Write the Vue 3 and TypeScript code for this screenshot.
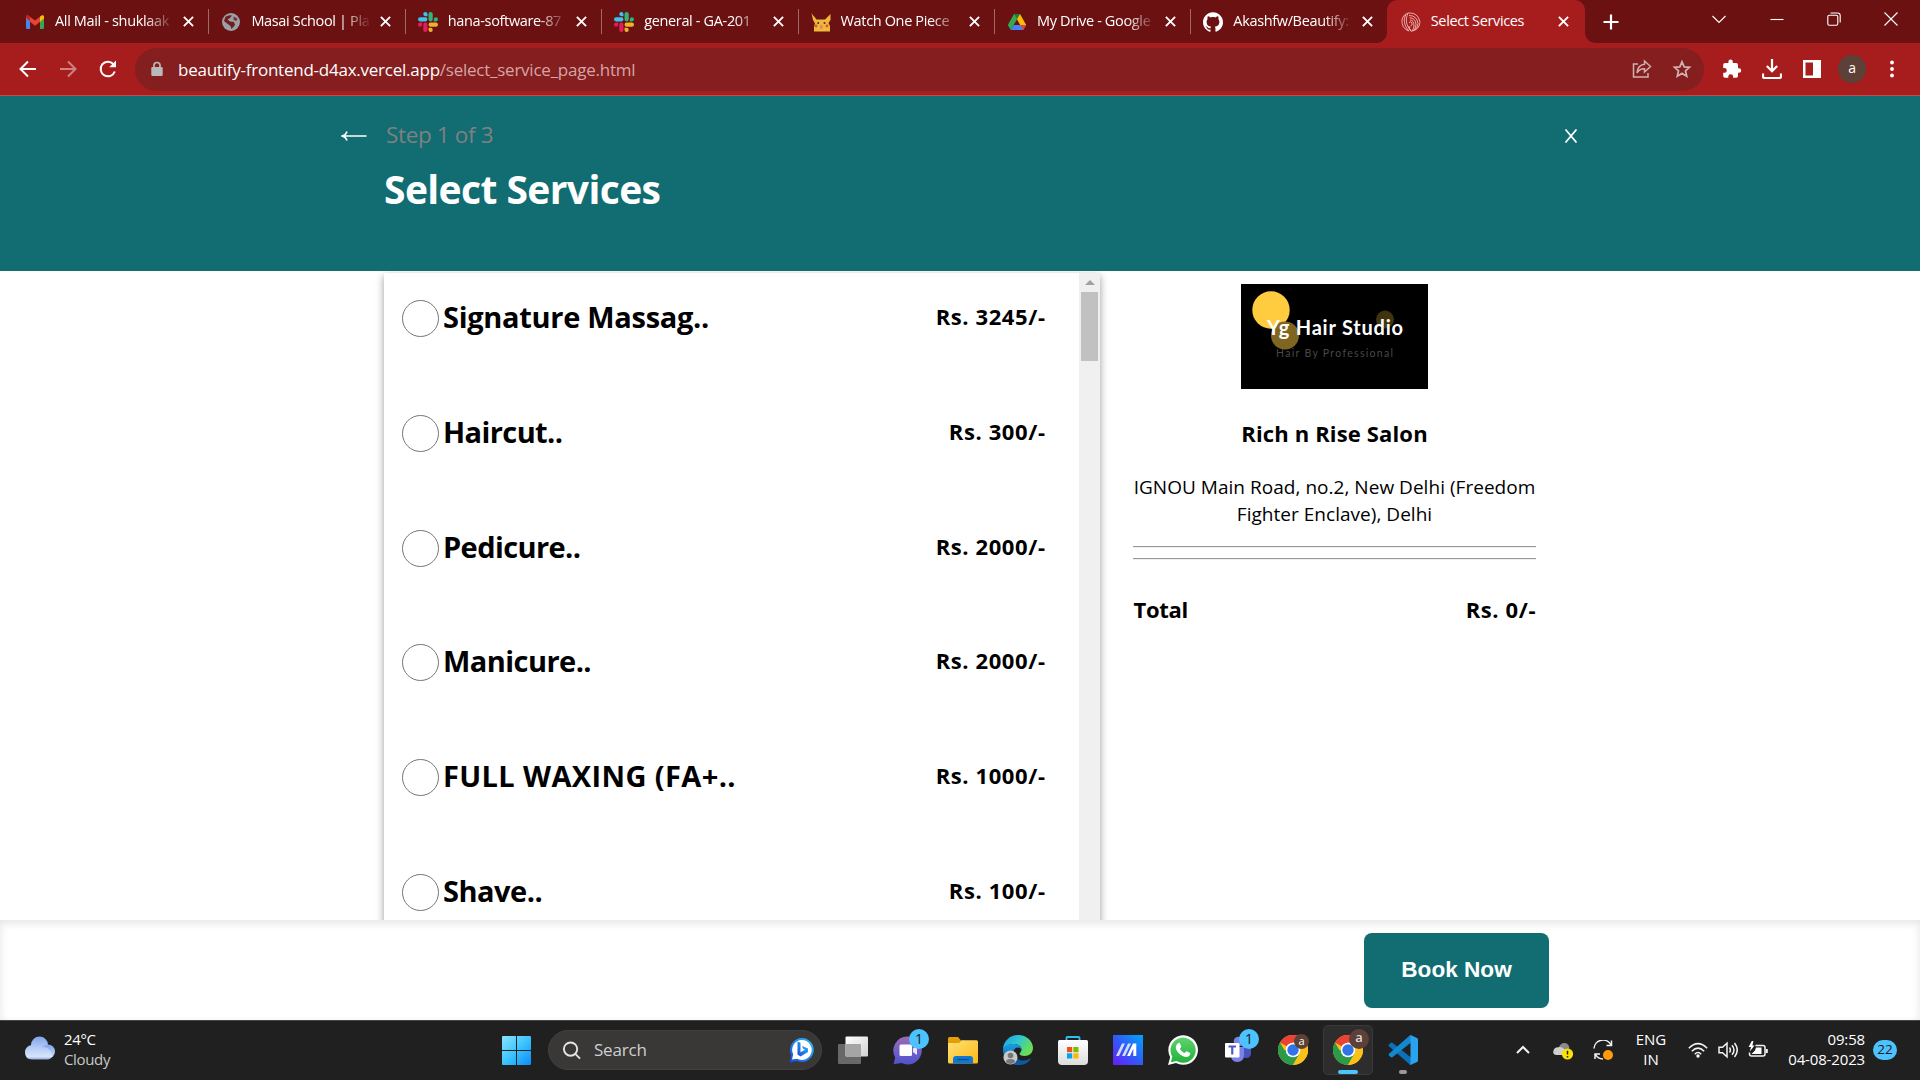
<script setup lang="ts">
interface Tab {
  icon: string
  title: string
  active?: boolean
}

interface Service {
  name: string
  price: number
  tracking: number
}

interface TaskItem {
  icon: string
  badge?: string
  state?: 'active' | 'running'
}

const tabs: Tab[] = [
  { icon: 'gmail', title: 'All Mail - shuklaak' },
  { icon: 'globe', title: 'Masai School | Pla' },
  { icon: 'slack', title: 'hana-software-87' },
  { icon: 'slack', title: 'general - GA-201' },
  { icon: 'pikachu', title: 'Watch One Piece' },
  { icon: 'drive', title: 'My Drive - Google' },
  { icon: 'github', title: 'Akashfw/Beautify:' },
  { icon: 'salon', title: 'Select Services', active: true },
]

const services: Service[] = [
  { name: 'Signature Massag..', price: 3245, tracking: -0.3 },
  { name: 'Haircut..', price: 300, tracking: -0.6 },
  { name: 'Pedicure..', price: 2000, tracking: -0.6 },
  { name: 'Manicure..', price: 2000, tracking: -0.55 },
  { name: 'FULL WAXING (FA+..', price: 1000, tracking: 0.38 },
  { name: 'Shave..', price: 100, tracking: -0.5 },
]

const taskItems: TaskItem[] = [
  { icon: 'taskview' },
  { icon: 'chat', badge: '1' },
  { icon: 'explorer' },
  { icon: 'edge' },
  { icon: 'store' },
  { icon: 'msi' },
  { icon: 'whatsapp' },
  { icon: 'teams', badge: '1' },
  { icon: 'chrome' },
  { icon: 'chrome2', state: 'active' },
  { icon: 'vscode', state: 'running' },
]
</script>

<template>
  <div class="screen">
    <svg class="sprite" width="0" height="0" aria-hidden="true">
      <defs>
        <linearGradient id="g-cloud" x1="0" y1="0" x2="0" y2="1">
          <stop offset="0" stop-color="#7fa4ea" /><stop offset="1" stop-color="#cfe0fb" />
        </linearGradient>
        <linearGradient id="g-cloud2" x1="0" y1="0" x2="0" y2="1">
          <stop offset="0" stop-color="#a9c4f3" /><stop offset=".8" stop-color="#d6e4fc" /><stop offset="1" stop-color="#8fa9de" />
        </linearGradient>
        <linearGradient id="g-win" gradientUnits="userSpaceOnUse" x1="0" y1="0" x2="29" y2="29">
          <stop offset="0" stop-color="#8be3ff" /><stop offset=".5" stop-color="#3cc4fd" /><stop offset="1" stop-color="#0a8cf5" />
        </linearGradient>
        <linearGradient id="g-bing" x1="0" y1="1" x2="1" y2="0">
          <stop offset="0" stop-color="#1b48e0" /><stop offset="1" stop-color="#2cc0f5" />
        </linearGradient>
        <linearGradient id="g-chat" x1="0" y1="0" x2="0" y2="1">
          <stop offset="0" stop-color="#9a6bb5" /><stop offset="1" stop-color="#4f52cf" />
        </linearGradient>
        <linearGradient id="g-folder" x1="0" y1="0" x2="1" y2="1">
          <stop offset="0" stop-color="#ffe078" /><stop offset="1" stop-color="#fdb913" />
        </linearGradient>
        <linearGradient id="g-edge" x1="0" y1="0" x2="1" y2=".5">
          <stop offset="0" stop-color="#1b9de2" /><stop offset=".5" stop-color="#2fc5d2" /><stop offset="1" stop-color="#6be04f" />
        </linearGradient>
        <linearGradient id="g-edge2" x1="0" y1="0" x2="0" y2="1">
          <stop offset="0" stop-color="#1aa0e4" /><stop offset="1" stop-color="#0d52a5" />
        </linearGradient>
        <linearGradient id="g-msi" x1="0" y1="1" x2="1" y2="0">
          <stop offset="0" stop-color="#6a1cf7" /><stop offset=".5" stop-color="#2f5bf8" /><stop offset="1" stop-color="#00a6fb" />
        </linearGradient>
        <linearGradient id="g-wa" x1="0" y1="0" x2="0" y2="1">
          <stop offset="0" stop-color="#5fd36d" /><stop offset="1" stop-color="#22b13c" />
        </linearGradient>
        <linearGradient id="g-tv" x1="0" y1="0" x2="1" y2="1">
          <stop offset="0" stop-color="#ffffff" /><stop offset="1" stop-color="#d2d2d2" />
        </linearGradient>
        <linearGradient id="g-store" x1="0" y1="0" x2="0" y2="1">
          <stop offset="0" stop-color="#ffffff" /><stop offset="1" stop-color="#dcdcdc" />
        </linearGradient>
      </defs>

      <symbol id="i-gmail" viewBox="0 0 20 20">
        <path d="M1 5v10.5q0 1.5 1.5 1.5H5V8z" fill="#4285f4" />
        <path d="M19 5v10.5q0 1.5-1.5 1.5H15V8z" fill="#34a853" />
        <path d="M15 5.2l1.4-1.5Q19 2.500 19 5.500L15 9.700z" fill="#fbbc04" />
        <path d="M1 5.500Q1 2.500 3.600 3.700L10 8.600l6.400-4.900L15 9.700l-5 4-5-4z" fill="#ea4335" />
        <path d="M15 4.800v4.900L19 6.500v-1Q18.800 2.600 16.400 3.700z" fill="#fbbc04" />
        <path d="M1 5.500L5 9V4.800L3.600 3.700Q1.200 2.800 1 5.500z" fill="#c5221f" />
      </symbol>
      <symbol id="i-globe" viewBox="0 0 20 20">
        <circle cx="10" cy="10" r="9" fill="#9aa0a6" />
        <path d="M4.500 4.800Q8 2.500 11 3.500L9 6 6.500 7.500 9 9.500l4 .5 1 3-3.500 4-1-3L6.800 12 3 9z" fill="#6b1112" opacity=".92" />
        <path d="M12.500 4.500l4 2-1 2.500-3-1z" fill="#6b1112" opacity=".75" />
      </symbol>
      <symbol id="i-slack" viewBox="0 0 24 24">
        <path d="M5.042 15.165a2.528 2.528 0 0 1-2.520 2.523A2.528 2.528 0 0 1 0 15.165a2.527 2.527 0 0 1 2.522-2.520h2.520zm1.271 0a2.527 2.527 0 0 1 2.521-2.520 2.527 2.527 0 0 1 2.521 2.520v6.313A2.528 2.528 0 0 1 8.834 24a2.528 2.528 0 0 1-2.521-2.522z" fill="#e01e5a" />
        <path d="M8.834 5.042a2.528 2.528 0 0 1-2.521-2.520A2.528 2.528 0 0 1 8.834 0a2.528 2.528 0 0 1 2.521 2.522v2.520zm0 1.271a2.528 2.528 0 0 1 2.521 2.521 2.528 2.528 0 0 1-2.521 2.521H2.522A2.528 2.528 0 0 1 0 8.834a2.528 2.528 0 0 1 2.522-2.521z" fill="#36c5f0" />
        <path d="M18.956 8.834a2.528 2.528 0 0 1 2.522-2.521A2.528 2.528 0 0 1 24 8.834a2.528 2.528 0 0 1-2.522 2.521h-2.522zm-1.270 0a2.528 2.528 0 0 1-2.523 2.521 2.527 2.527 0 0 1-2.520-2.521V2.522A2.527 2.527 0 0 1 15.163 0a2.528 2.528 0 0 1 2.523 2.522z" fill="#2eb67d" />
        <path d="M15.163 18.956a2.528 2.528 0 0 1 2.523 2.522A2.528 2.528 0 0 1 15.163 24a2.527 2.527 0 0 1-2.520-2.522v-2.522zm0-1.270a2.527 2.527 0 0 1-2.520-2.523 2.526 2.526 0 0 1 2.520-2.520h6.315A2.527 2.527 0 0 1 24 15.163a2.528 2.528 0 0 1-2.522 2.523z" fill="#ecb22e" />
      </symbol>
      <symbol id="i-pikachu" viewBox="0 0 20 20">
        <path d="M.5 1l5 6.500h8.500L19.500 2v6l-2 3 1.500 3v5.500H3V15l1-3.500L2 8z" fill="#edb83c" />
        <path d="M.5 1l2.200 1.500.8 2.500z" fill="#4a2c12" />
        <circle cx="7.200" cy="11" r="1" fill="#4a2c12" /><circle cx="13.500" cy="11" r="1" fill="#4a2c12" />
        <circle cx="5" cy="14" r="1.400" fill="#e0552c" /><circle cx="16" cy="14" r="1.400" fill="#e0552c" />
        <ellipse cx="10.400" cy="15" rx="1.500" ry="2" fill="#e9806a" />
      </symbol>
      <symbol id="i-drive" viewBox="0 0 20 20">
        <path d="M7 2L.800 13l3 5L10 7.200z" fill="#34a853" />
        <path d="M7 2h6l6.200 11h-6z" fill="#fbbc04" />
        <path d="M6.600 13h12.600l-3 5H3.800z" fill="#4285f4" />
        <path d="M13.200 13h6l-3 5z" fill="#ea4335" />
        <path d="M7 2h6l-3 5.200z" fill="#188038" />
      </symbol>
      <symbol id="i-github" viewBox="0 0 24 24">
        <path fill="#fff" d="M12 .297c-6.630 0-12 5.373-12 12 0 5.303 3.438 9.800 8.205 11.385.600.113.820-.258.820-.577 0-.285-.010-1.040-.015-2.040-3.338.724-4.042-1.610-4.042-1.610C4.422 18.070 3.633 17.700 3.633 17.700c-1.087-.744.084-.729.084-.729 1.205.084 1.838 1.236 1.838 1.236 1.070 1.835 2.809 1.305 3.495.998.108-.776.417-1.305.760-1.605-2.665-.300-5.466-1.332-5.466-5.930 0-1.310.465-2.380 1.235-3.220-.135-.303-.540-1.523.105-3.176 0 0 1.005-.322 3.300 1.230.960-.267 1.980-.399 3-.405 1.020.006 2.040.138 3 .405 2.280-1.552 3.285-1.230 3.285-1.230.645 1.653.240 2.873.120 3.176.765.840 1.230 1.910 1.230 3.220 0 4.610-2.805 5.625-5.475 5.920.420.360.810 1.096.810 2.220 0 1.606-.015 2.896-.015 3.286 0 .315.210.690.825.570C20.565 22.092 24 17.592 24 12.297c0-6.627-5.373-12-12-12" />
      </symbol>
      <symbol id="i-salon" viewBox="0 0 20 20">
        <g fill="none" stroke="#f0bcb8" stroke-width=".9">
          <path d="M8 .8A9 9.300 0 0 0 1 8q-.5 8 6.500 11M5 2.500C2 7 3 14 8 19M7 1.500C4 7 5 13 10 19.300q8-1 9-9" />
          <path d="M8 3.500q8 0 9 8-.5 4-3 6.500M8.500 5.800q6 0 6.500 6.500 0 4-2.500 6.500M9 8q4 0 4 6-.2 3-2 5M8 1q9-.500 11 9" />
          <path d="M8 10.500q2-1.500 3 .5t-1.500 3M8 14q.5 3 2 5" />
        </g>
      </symbol>

      <symbol id="i-win" viewBox="0 0 29 29">
        <path d="M0 1Q0 0 1 0h13v14H0zM15 0h13q1 0 1 1v13H15zM0 15h14v14H1q-1 0-1-1zM15 15h14v13q0 1-1 1H15z" fill="url(#g-win)" />
      </symbol>
      <symbol id="i-taskview" viewBox="0 0 30 30">
        <rect x="0" y="9" width="23" height="20" rx="1" fill="#686868" />
        <rect x="7.500" y="1.500" width="22.500" height="20" rx="1" fill="url(#g-tv)" />
        <path d="M7.500 9H22q1 0 1 1v11.500H8.500q-1 0-1-1z" fill="#a5a5a5" />
      </symbol>
      <symbol id="i-chat" viewBox="0 0 30 30">
        <path d="M14.500 1.500a14 14 0 1 1-6 26.500L.600 29.200l1.600-6.700A14 14 0 0 1 14.500 1.500z" fill="url(#g-chat)" />
        <rect x="6.500" y="9.500" width="12.500" height="11.500" rx="1.500" fill="#fff" />
        <path d="M20 13.500l3-2.500q1-.500 1 .500v7.500q0 1-1 .500l-3-2.500z" fill="#e8e4fb" />
      </symbol>
      <symbol id="i-explorer" viewBox="0 0 30 30">
        <path d="M0 3.500Q0 2 1.500 2H10l3 3.500h3V10H0z" fill="#e2a008" />
        <path d="M0 8h11l3-2.800h14.500Q30 5.200 30 6.700V27q0 1.500-1.500 1.500h-27Q0 28.500 0 27z" fill="url(#g-folder)" />
        <path d="M5 28.500V24q0-3 3-3h14q3 0 3 3v4.500z" fill="#0f78d0" />
        <path d="M9 24.500h12" stroke="#064d91" stroke-width="1.200" />
      </symbol>
      <symbol id="i-edge" viewBox="0 0 30 30">
        <path d="M0 15C0 6 7 0 15 0c9 0 15 6.500 15 13 0 5-4 8-8.500 8-3.500 0-5-1.200-5-2.200 0-.800 2-1.800 2-4.300C18.500 11 15 9 11 9 5 9 1 12 0 15z" fill="url(#g-edge)" />
        <path d="M0 15C1 11 5 9 10.500 9c5 0 8 3 8 5.500-1-2-7-4-8 3C10 22 14.500 26 20 26c4 0 7-2 8-3-2 4.500-7 7-13 7C6.500 30 0 23.500 0 15z" fill="url(#g-edge2)" />
        <path d="M11 16c-1 5 4 10 10 9.500 3 0 5-1 7-2.500-2 4.500-7 7-13 7-2 0-3-.300-4-.800z" fill="#0c59a4" />
        <circle cx="7.500" cy="22.500" r="7" fill="#c9c9c9" />
        <circle cx="7.500" cy="20.500" r="2.800" fill="#777" /><path d="M2.800 27Q3 24 7.500 24t4.700 3q-4.700 4-9.400 0z" fill="#777" />
      </symbol>
      <symbol id="i-store" viewBox="0 0 30 30">
        <path d="M8.500 7V2.800Q8.500 2 9.500 2h11q1 0 1 .800V7" fill="none" stroke="#2fc0f2" stroke-width="1.800" />
        <path d="M0 6.500Q0 5 1.500 5h27Q30 5 30 6.500V26q0 4-4 4H4q-4 0-4-4z" fill="url(#g-store)" />
        <path d="M9 12h5.200v5.200H9z" fill="#f1511b" /><path d="M15.300 12h5.200v5.200h-5.200z" fill="#80bb01" />
        <path d="M9 18.300h5.200v5.200H9z" fill="#00a4ef" /><path d="M15.300 18.300h5.200v5.200h-5.200z" fill="#fbb902" />
      </symbol>
      <symbol id="i-msi" viewBox="0 0 30 30">
        <path d="M0 0h30v30H0z" fill="url(#g-msi)" />
        <path d="M3 21L9 8.500h3L6 21zM9 21l6-12.500h3L12 21z" fill="#cfdcff" />
        <path d="M14 21l6-12.500h3.300V21h-3v-7.500L17 21z" fill="#fff" />
      </symbol>
      <symbol id="i-whatsapp" viewBox="0 0 30 30">
        <path d="M0 30l2.200-7.800A14.800 14.800 0 1 1 8 28z" fill="#fff" />
        <path d="M2.800 27.200l1.500-5.500A12.600 12.600 0 1 1 8.600 26z" fill="url(#g-wa)" />
        <path d="M10.500 8q1-.500 1.500.500l1.200 2.800q.2.600-.3 1.200l-1 1.200c1 2 2.600 3.500 4.800 4.400l1.300-1.500q.5-.5 1.100-.2l2.700 1.300q.7.400.5 1.100-.6 3-3.800 3.200c-2.500 0-7-2-9.500-6C7 13 7.700 9.500 10.500 8z" fill="#fff" />
      </symbol>
      <symbol id="i-teams" viewBox="0 0 30 30">
        <circle cx="23.500" cy="8" r="3.500" fill="#5059c9" />
        <path d="M17 12h11v6q0 5-5 5t-6-5z" fill="#4b53bc" />
        <circle cx="15.500" cy="6.500" r="4.800" fill="#7b83eb" />
        <path d="M8 12h13v8q0 7-7 7-6 0-6-7z" fill="#7b83eb" />
        <rect x="2" y="8" width="14.500" height="14.500" rx="1" fill="#fff" />
        <path d="M5.500 11.500h7.500M9.250 11.500v8" stroke="#5059c9" stroke-width="2.200" />
      </symbol>
      <symbol id="i-chromebase" viewBox="0 0 30 30">
        <circle cx="15" cy="15" r="15" fill="#fbc116" />
        <path d="M2 7.500A15 15 0 0 1 28 7.500H15L8.500 11.250z" fill="#ea4335" />
        <path d="M2 7.500A15 15 0 0 0 15 30l6.500-11.250L15 15H6.340z" fill="#2c9a48" />
        <path d="M28 7.500A15 15 0 0 1 15 30l6.500-11.250L20 7.500z" fill="#fbc116" />
        <circle cx="15" cy="15" r="7.300" fill="#fff" /><circle cx="15" cy="15" r="5.700" fill="#2f74e8" />
      </symbol>
      <symbol id="i-chrome" viewBox="0 0 30 30"><use href="#i-chromebase" /></symbol>
      <symbol id="i-chrome2" viewBox="0 0 30 30"><use href="#i-chromebase" /></symbol>
      <symbol id="i-vscode" viewBox="0 0 30 30">
        <path d="M1 9.500l2-1.800q.7-.5 1.400 0L23 22.500v7L22 29.800 1 11.300q-.8-.9 0-1.800z" fill="#0b70b8" />
        <path d="M1 20.500l2 1.800q.7.500 1.400 0L23 7.500V.500L22 .200 1 18.700q-.8.900 0 1.800z" fill="#1387d2" />
        <path d="M22 .200q.5-.3 1 0l6 2.800q1 .5 1 1.500v21q0 1-1 1.500l-6 2.800q-.5.300-1 0 .5-.3.500-1.300V1.500q0-1-.5-1.300z" fill="#2aa3ee" />
      </symbol>
    </svg>

    <div class="tabstrip">
      <div v-for="(tab, i) in tabs" :key="i" class="tab" :class="{ active: tab.active }">
        <svg class="favicon"><use :href="`#i-${tab.icon}`" /></svg>
        <span class="tab-title">{{ tab.title }}</span>
        <svg class="tab-x" viewBox="0 0 10 10"><path d="M.8.800l8.400 8.400M9.200.800L.8 9.200" /></svg>
      </div>
      <svg class="plus" viewBox="0 0 16 16"><path d="M8 .500v15M.5 8h15" /></svg>
      <div class="win-controls">
        <svg viewBox="0 0 14 14"><path d="M.5 4L7 10.500 13.500 4" /></svg>
        <svg viewBox="0 0 14 14"><path d="M.5 7.500h13" /></svg>
        <svg viewBox="0 0 14 14"><rect x=".8" y="3.200" width="10" height="10" rx="1.500" /><path d="M3.500 1h7Q13.200 1 13.200 3.500v7" /></svg>
        <svg viewBox="0 0 14 14"><path d="M.5.500l13 13M13.500.500l-13 13" /></svg>
      </div>
    </div>

    <div class="toolbar">
      <svg class="nav" viewBox="0 0 20 20"><path d="M18 10H2.500M10 2.500L2.500 10l7.500 7.500" /></svg>
      <svg class="nav dim" viewBox="0 0 20 20"><path d="M2 10h15.500M10 2.500l7.500 7.500-7.500 7.500" /></svg>
      <svg class="nav" viewBox="0 0 20 20"><path d="M16.800 12.500A7.300 7.300 0 1 1 15.300 5l1.500 1.700" /><path d="M18 1.500v6.800h-6.800z" fill="#fff" stroke="none" /></svg>
      <div class="omnibox">
        <svg class="lock" viewBox="0 0 12 16"><path d="M3 7V4.200Q3 1.500 6 1.500T9 4.200V7" fill="none" stroke="#b9babc" stroke-width="1.700" /><rect x=".3" y="6" width="11.400" height="9" rx="1.300" fill="#b9babc" /></svg>
        <span class="url"><b>beautify-frontend-d4ax.vercel.app</b><i>/select_service_page.html</i></span>
        <svg class="omni-icon" viewBox="0 0 20 20"><path d="M6 5H1.500v13H16v-4" /><path d="M12.500 2l6 5.500-6 5.500V9.800Q7.500 9.500 5 14 5.500 6 12.500 5.200z" /></svg>
        <svg class="omni-icon star" viewBox="0 0 20 20"><path d="M10 2.800l2.200 5 5.300.5-4 3.600 1.200 5.300L10 14.400l-4.700 2.800 1.200-5.300-4-3.600 5.300-.5z" /></svg>
      </div>
      <div class="tools">
        <svg viewBox="0 0 20 20"><path d="M17 9.300h-1V5.800q0-1.800-1.800-1.800h-3.400V2.800a2.200 2.200 0 0 0-4.400 0V4H3Q1.200 4 1.200 5.800V9h1.200a2.400 2.400 0 0 1 0 4.800H1.200V17q0 1.800 1.800 1.800h3.300v-1.200a2.400 2.400 0 0 1 4.800 0v1.200h3.100q1.800 0 1.800-1.800v-3.300h1a2.200 2.200 0 0 0 0-4.400z" fill="#fff" /></svg>
        <svg viewBox="0 0 20 20"><path d="M10 0v11.500M4.800 7L10 12.200 15.200 7M1 14.500v2.800Q1 19 2.700 19h14.600q1.700 0 1.700-1.700v-2.800" fill="none" stroke="#fff" stroke-width="2.200" /></svg>
        <svg viewBox="0 0 20 20"><path d="M1 1h18v18H1zM3.500 3.500v13H11v-13z" fill="#fff" fill-rule="evenodd" /></svg>
        <span class="avatar">a</span>
        <svg viewBox="0 0 20 20"><g fill="#fff"><circle cx="10" cy="3.500" r="1.900" /><circle cx="10" cy="10" r="1.900" /><circle cx="10" cy="16.500" r="1.900" /></g></svg>
      </div>
    </div>

    <header class="hero">
      <svg class="back" viewBox="0 0 26 12"><path d="M25.500 6H1.500M6 1.500Q5 5 1.200 6 5 7 6 10.500" /></svg>
      <div class="hero-text">
        <p>Step 1 of 3</p>
        <h1>Select Services</h1>
      </div>
      <svg class="close" viewBox="0 0 14 14"><path d="M1.500.500l11 13M12.500.500l-11 13" /></svg>
    </header>

    <main class="content">
      <section class="services">
        <ul>
          <li v-for="s in services" :key="s.name">
            <span class="radio"></span>
            <h2 :style="{ letterSpacing: `${s.tracking}px` }">{{ s.name }}</h2>
            <h3 class="price">Rs. {{ s.price }}/-</h3>
          </li>
        </ul>
        <div class="scrollbar"><i class="up"></i><i class="thumb"></i></div>
      </section>
      <aside class="summary">
        <svg class="logo" viewBox="0 0 187 105">
          <rect width="187" height="105" fill="#000" />
          <circle cx="30" cy="26" r="18.700" fill="#ffcb3f" />
          <circle cx="44" cy="51.500" r="14" fill="#806522" />
          <circle cx="144" cy="35.500" r="9" fill="#40330f" />
          <text x="26" y="51" textLength="136" font-size="20" font-weight="700" fill="#fff">Yg Hair Studio</text>
          <text x="35" y="73" textLength="117" font-size="10.500" fill="#484848">Hair By Professional</text>
        </svg>
        <h3 class="salon">Rich n Rise Salon</h3>
        <p class="address">IGNOU Main Road, no.2, New Delhi (Freedom<br />Fighter Enclave), Delhi</p>
        <hr /><hr />
        <div class="total"><h3>Total</h3><h3 class="price">Rs. 0/-</h3></div>
      </aside>
    </main>

    <footer class="booking"><button>Book Now</button></footer>

    <div class="taskbar">
      <div class="weather">
        <svg viewBox="0 0 30 24"><circle cx="14.500" cy="9" r="8.500" fill="url(#g-cloud)" /><circle cx="23" cy="15.500" r="7" fill="url(#g-cloud)" /><path d="M7 9q5 0 7.500 5Q17 11 20 11q8 4 7 9-1 3.500-5 3.500H7Q0 23 0 16.500T7 9z" fill="url(#g-cloud2)" /></svg>
        <div><span>24°C</span><span class="muted">Cloudy</span></div>
      </div>
      <svg class="start"><use href="#i-win" /></svg>
      <div class="search">
        <svg class="glass" viewBox="0 0 20 20"><circle cx="9" cy="8.500" r="7" /><path d="M14 13.500l5 5" /></svg>
        <span>Search</span>
        <svg class="bing" viewBox="0 0 26 26"><path d="M13 1A12 12 0 1 1 8 24L.8 25.400 2 18A12 12 0 0 1 13 1z" fill="url(#g-bing)" /><path d="M13 3a10 10 0 1 1-5 18.800L3 22.500 4.200 17.500A10 10 0 0 1 13 3z" fill="#fff" /><path d="M8.500 4.500l3 1.200v9.500l4.500-2.500-2-1.200-1-2.500 6 2.500v3.500l-7.500 4.500-3-2z" fill="url(#g-bing)" /></svg>
      </div>
      <div class="apps">
        <div v-for="item in taskItems" :key="item.icon" class="app" :class="item.state">
          <svg class="app-icon"><use :href="`#i-${item.icon}`" /></svg>
          <span v-if="item.badge" class="badge">{{ item.badge }}</span>
          <span v-if="item.icon === 'chrome'" class="profile">a</span>
          <span v-if="item.icon === 'chrome2'" class="profile big">a</span>
        </div>
      </div>
      <div class="tray">
        <svg class="chev" viewBox="0 0 14 10"><path d="M1 8l6-6 6 6" /></svg>
        <svg class="onedrive" viewBox="0 0 20 18"><path d="M6 5Q8 .5 12 1t4.500 5.500L8 11z" fill="#8a8a8a" /><path d="M.2 9.500Q1 5 5.500 5.200 9 4 12 8l1 5H3Q0 12.500.2 9.500z" fill="#cfcfcf" /><circle cx="14.500" cy="12" r="5.600" fill="#fde100" /><path d="M14.500 8.800v3.800M14.500 14v1.500" stroke="#222" stroke-width="1.500" /></svg>
        <svg class="sync" viewBox="0 0 20 20"><path d="M1 8.500A9 9 0 0 1 18 5M18.500.500V5.500H13.500M2 19v-5h5M2.500 14.500Q5 19 10 19" /><circle cx="15" cy="15" r="5" fill="#ff9a0c" stroke="none" /></svg>
        <div class="lang"><span>ENG</span><span>IN</span></div>
        <svg class="wifi" viewBox="0 0 20 16"><path d="M.8 6.200Q10-3 19.200 6.200M3.800 9.200Q10 3 16.200 9.200M6.800 12.200Q10 9 13.200 12.200" /><circle cx="10" cy="14" r="1.700" fill="#fff" stroke="none" /></svg>
        <svg class="vol" viewBox="0 0 20 18"><path d="M1 6.200h3.500L9 2.200v13.600L4.500 11.800H1zM11.500 6.500q1.800 2.500 0 5M14 4.200q4 4.800 0 9.600M16.500 2q5.500 7 0 14" /></svg>
        <svg class="bat" viewBox="0 0 20 18"><path d="M7.500 4.500H15q2 0 2 2v6.500q0 2-2 2H3.500q-2 0-2-2v-1.500" /><path d="M8 6.500h5.500v6.500H3.500L7 9.500z" fill="#fff" stroke="none" /><path d="M18.800 8v4" stroke-width="2" /><path d="M3.800 0L.6 6h2.400L1.800 10.500l4.700-6H4.400L5.400 0z" fill="#fff" stroke="none" /></svg>
        <div class="clock"><span>09:58</span><span>04-08-2023</span></div>
        <span class="count">22</span>
      </div>
    </div>
  </div>
</template>

<style>
html,
body {
  overflow: hidden;
  background: #fff;
}
</style>

<style scoped>
* {
  box-sizing: border-box;
  margin: 0;
  padding: 0;
}
.screen {
  width: 1920px;
  height: 1080px;
  display: flex;
  flex-direction: column;
  overflow: hidden;
  font-family: 'Open Sans', 'Noto Sans', sans-serif;
  color: #000;
}
.screen svg {
  flex: none;
  display: block;
}
.sprite {
  position: absolute;
}

/* browser tabs */
.tabstrip {
  flex: none;
  height: 43px;
  display: flex;
  align-items: center;
  background: #6b1112;
  padding-left: 12px;
}
.tab {
  flex: none;
  width: 196.400px;
  height: 43px;
  padding: 0 14px 0 13px;
  display: flex;
  align-items: center;
  color: #fff;
  position: relative;
}
.tab:not(.active)::after {
  content: '';
  position: absolute;
  right: -1px;
  top: 9px;
  width: 1px;
  height: 25px;
  background: #a06a6a;
}
.tab:nth-child(7)::after {
  display: none;
}
.tab.active {
  width: 198px;
  background: #a71d1e;
  border-radius: 10px 10px 0 0;
  padding: 0 16px 0 14px;
}
.tab.active::before,
.tab.active::after {
  content: '';
  position: absolute;
  bottom: 0;
  width: 10px;
  height: 10px;
}
.tab.active::before {
  left: -10px;
  background: radial-gradient(circle at 0 0, transparent 9.500px, #a71d1e 10px);
}
.tab.active::after {
  right: -10px;
  background: radial-gradient(circle at 100% 0, transparent 9.500px, #a71d1e 10px);
}
.favicon {
  width: 20px;
  height: 20px;
}
.tab-title {
  flex: 1;
  min-width: 0;
  margin: -1px 10px 0;
  font-size: 14.500px;
  line-height: 20px;
  letter-spacing: -0.350px;
  white-space: nowrap;
  mask-image: linear-gradient(to right, #000 76%, transparent 101%);
}
.active .tab-title {
  mask-image: none;
}
.tab-x {
  width: 11px;
  height: 11px;
  fill: none;
  stroke: #fff;
  stroke-width: 1.700;
}
.plus {
  width: 16px;
  height: 16px;
  margin-left: 18px;
  fill: none;
  stroke: #fff;
  stroke-width: 2.200;
}
.win-controls {
  display: flex;
  gap: 43.200px;
  margin: -6px 22px 0 auto;
}
.win-controls svg {
  width: 14px;
  height: 14px;
  fill: none;
  stroke: #fff;
  stroke-width: 1.100;
}

/* address bar */
.toolbar {
  flex: none;
  height: 53px;
  background: #a71d1e;
  border-bottom: 1px solid #b94f4f;
  display: flex;
  align-items: center;
  padding: 0 18px;
}
.nav {
  width: 20px;
  height: 20px;
  margin-right: 20px;
  fill: none;
  stroke: #fff;
  stroke-width: 2;
}
.nav.dim {
  opacity: 0.450;
}
.nav:nth-child(3) {
  margin-right: 17px;
}
.omnibox {
  width: 1570px;
  height: 43px;
  border-radius: 22px;
  background: #841e1f;
  display: flex;
  align-items: center;
  padding: 0 12px 0 16px;
}
.lock {
  width: 12px;
  height: 16px;
}
.url {
  margin-left: 15px;
  flex: 1;
  font-size: 17px;
  letter-spacing: -0.240px;
}
.url b {
  font-weight: 400;
  color: #fff;
}
.url i {
  font-style: normal;
  color: #d6a5a5;
}
.omni-icon {
  width: 20px;
  height: 20px;
  fill: none;
  stroke: #ceb0b0;
  stroke-width: 1.500;
}
.star {
  margin-left: 20px;
  stroke-width: 1.800;
}
.tools {
  display: flex;
  align-items: center;
  justify-content: space-between;
  width: 180px;
  margin-left: 18px;
}
.tools svg {
  width: 20px;
  height: 20px;
}
.avatar {
  width: 28px;
  height: 28px;
  margin: 0 -4px;
  border-radius: 50%;
  background: #5d4037;
  color: #fff;
  font: 14px/26px 'Open Sans', sans-serif;
  text-align: center;
}

/* page header */
.hero {
  flex: none;
  height: 175px;
  background: #116d71;
  display: flex;
  align-items: flex-start;
  padding: 0 342px 0 341px;
}
.back {
  width: 26px;
  height: 12px;
  margin-top: 34px;
  fill: none;
  stroke: #fff;
  stroke-width: 1.500;
}
.hero-text {
  flex: 1;
  padding: 22px 0 0 17px;
}
.hero-text p {
  padding-left: 2px;
  font-size: 22.500px;
  line-height: 33px;
  letter-spacing: -0.350px;
  color: #808080;
}
.hero-text h1 {
  font-size: 39px;
  line-height: 52px;
  margin-top: 12px;
  letter-spacing: -0.600px;
  color: #fff;
}
.close {
  width: 14px;
  height: 14px;
  margin-top: 33px;
  fill: none;
  stroke: #fff;
  stroke-width: 1.700;
}

/* services and summary */
.content {
  flex: none;
  height: 649px;
  overflow: hidden;
  display: flex;
  padding: 2px 0 0 384px;
}
.services {
  width: 716px;
  height: 900px;
  display: flex;
  box-shadow: 0 3px 8px rgba(0, 0, 0, 0.400);
}
.services ul {
  flex: 1;
  list-style: none;
}
.services li {
  height: 114.800px;
  padding: 27px 34px 0 18px;
  display: flex;
  align-items: flex-start;
}
.radio {
  flex: none;
  width: 37px;
  height: 37px;
  border: 1px solid #767676;
  border-radius: 50%;
}
.services h2 {
  flex: 1;
  margin: -3px 0 0 4px;
  font-size: 29px;
  line-height: 40px;
  white-space: nowrap;
}
h3 {
  font-size: 22px;
  line-height: 30px;
  letter-spacing: -0.300px;
}
.price {
  letter-spacing: 0.600px;
  margin-right: -0.600px;
}
.services h3 {
  margin-top: 1px;
}
.scrollbar {
  width: 21px;
  background: #f0f0f0;
  display: flex;
  flex-direction: column;
  align-items: center;
}
.up {
  margin-top: 7px;
  border: 5px solid transparent;
  border-top: 0;
  border-bottom: 5px solid #a0a0a0;
}
.thumb {
  margin-top: 7px;
  width: 17px;
  height: 69px;
  background: #c1c1c1;
}
.summary {
  width: 403px;
  margin: 11px 0 0 33px;
  display: flex;
  flex-direction: column;
  align-items: center;
}
.logo {
  width: 187px;
  height: 105px;
  font-family: Lato, sans-serif;
}
.salon {
  margin-top: 29px;
  letter-spacing: 0.150px;
}
.address {
  margin-top: 26px;
  font-size: 19px;
  line-height: 27px;
  letter-spacing: 0.030px;
  text-align: center;
  white-space: nowrap;
}
.summary hr {
  width: 403px;
  height: 2px;
  border: 0;
  border-top: 1px solid #9a9a9a;
  border-bottom: 1px solid #eee;
}
.address + hr {
  margin: 18px 0 10px;
}
.total {
  width: 402px;
  display: flex;
  justify-content: space-between;
  margin-top: 34px;
}

/* booking bar */
.booking {
  flex: none;
  height: 100px;
  background: #fff;
  box-shadow: inset 0 3px 8px rgba(0, 0, 0, 0.110);
  display: flex;
  justify-content: flex-end;
  padding: 13px 371px 0 0;
}
.booking button {
  width: 185px;
  height: 75px;
  border: 0;
  border-radius: 8px;
  background: #116d71;
  color: #fff;
  padding-bottom: 2px;
  font: 700 22.600px 'Liberation Sans', Arial, sans-serif;
}

/* taskbar */
.taskbar {
  flex: none;
  height: 60px;
  background: #202020;
  border-top: 1px solid #424645;
  display: flex;
  align-items: center;
  color: #fff;
  font-size: 15px;
  line-height: 20px;
  padding-bottom: 1px;
}
.weather {
  width: 477px;
  margin-left: 25px;
  display: flex;
  align-items: center;
  gap: 9px;
  letter-spacing: -0.350px;
}
.weather svg {
  width: 30px;
  height: 24px;
  margin-top: -4px;
}
.weather div,
.lang,
.clock {
  display: flex;
  flex-direction: column;
  margin-top: -2px;
}
.muted {
  color: #c8c8c8;
}
.start {
  width: 29px;
  height: 29px;
}
.search {
  width: 274px;
  height: 40px;
  margin-left: 17px;
  border-radius: 20px;
  background: #393837;
  border: 1px solid #424140;
  display: flex;
  align-items: center;
  padding: 0 6px 0 13px;
}
.glass {
  width: 19px;
  height: 19px;
  fill: none;
  stroke: #e4e4e4;
  stroke-width: 2;
}
.search span {
  flex: 1;
  margin-left: 13px;
  font-size: 17px;
  letter-spacing: -0.200px;
  color: #cfcfcf;
}
.bing {
  width: 26px;
  height: 26px;
}
.apps {
  display: flex;
  gap: 5px;
  margin-left: 6px;
}
.app {
  width: 50px;
  height: 50px;
  border: 1px solid transparent;
  border-radius: 5px;
  display: flex;
  align-items: center;
  justify-content: center;
  position: relative;
}
.app.active {
  background: #2d2d2d;
  border-color: #3a3a3a;
}
.app.active::after,
.app.running::after {
  content: '';
  position: absolute;
  bottom: 0;
  width: 20px;
  height: 4px;
  border-radius: 2px;
  background: #4cc2ff;
}
.app.running::after {
  width: 8px;
  background: #9a9a9a;
}
.app-icon {
  width: 30px;
  height: 30px;
}
.badge,
.profile {
  position: absolute;
  border-radius: 50%;
  text-align: center;
}
.badge {
  right: 3px;
  top: 3px;
  width: 20px;
  height: 20px;
  background: #4cc2ff;
  color: #1a1a1a;
  font-size: 14px;
}
.profile {
  right: 8px;
  top: 8px;
  width: 15px;
  height: 15px;
  background: #5d4037;
  color: #fff;
  font-size: 11px;
  line-height: 13px;
}
.profile.big {
  right: 3px;
  top: 3px;
  width: 20px;
  height: 20px;
  font-size: 13px;
  font-weight: 600;
  line-height: 17px;
  color: #ddd;
}
.tray {
  margin: 0 23px 0 auto;
  display: flex;
  align-items: center;
}
.tray svg {
  fill: none;
  stroke: #f2f2f2;
  stroke-width: 1.500;
}
.tray .onedrive {
  stroke: none;
}
.tray .chev {
  width: 14px;
  height: 10px;
  stroke-width: 2;
}
.onedrive {
  width: 20px;
  height: 18px;
  margin: 2px 0 0 23px;
}
.sync {
  width: 20px;
  height: 20px;
  margin-left: 20px;
}
.lang {
  width: 40px;
  margin-left: 18px;
  text-align: center;
}
.wifi {
  width: 20px;
  height: 16px;
  margin-left: 17px;
}
.vol,
.bat {
  width: 20px;
  height: 18px;
  margin-left: 10px;
}
.clock {
  width: 87px;
  margin-left: 10px;
  white-space: nowrap;
  align-items: flex-end;
  letter-spacing: -0.150px;
}
.count {
  width: 24px;
  height: 20px;
  margin-left: 8px;
  border-radius: 10px;
  background: #4cc2ff;
  color: #1a1a1a;
  font-size: 13.500px;
  line-height: 19px;
  text-align: center;
}
</style>
